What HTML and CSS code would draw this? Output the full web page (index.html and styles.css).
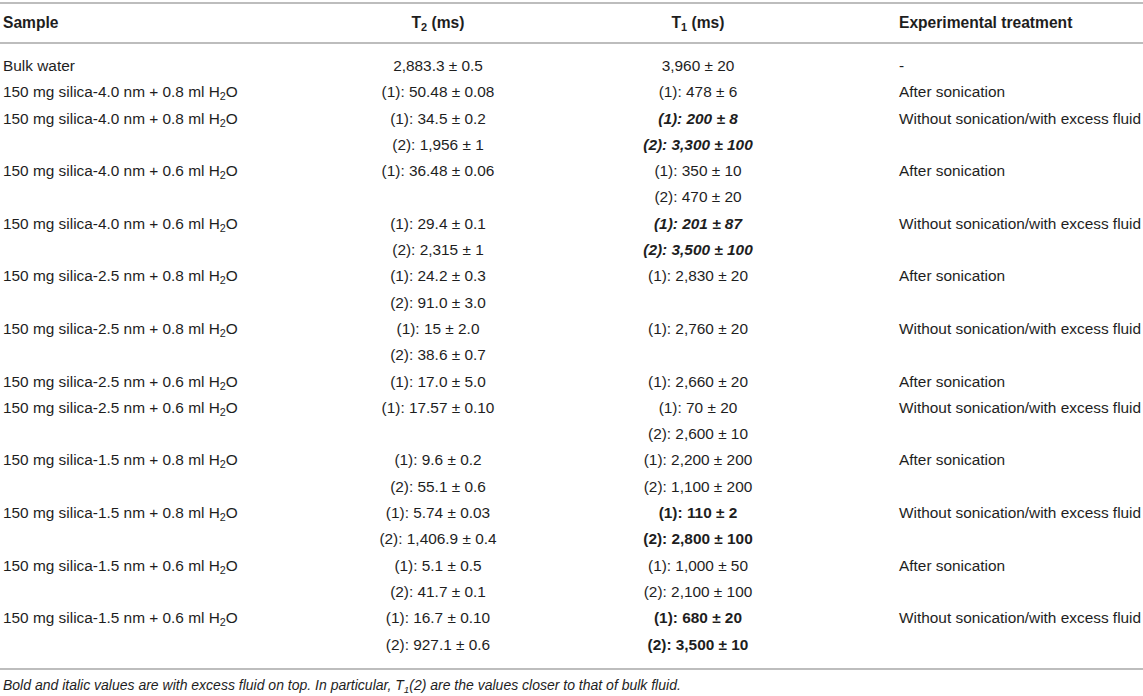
FILE: index.html
```html
<!DOCTYPE html>
<html lang="en">
<head>
  <meta charset="UTF-8">
  <title>Relaxation times</title>
  <link rel="stylesheet" href="styles.css">
</head>
<body>

  <table class="data-table">
    <colgroup>
      <col class="col-sample">
      <col class="col-t2">
      <col class="col-t1">
      <col class="col-treat">
    </colgroup>
    <thead>
      <tr>
        <th class="sample">Sample</th>
        <th class="num">T<sub>2</sub> (ms)</th>
        <th class="num">T<sub>1</sub> (ms)</th>
        <th class="treat">Experimental treatment</th>
      </tr>
    </thead>
    <tbody>
      <tr class="first">
        <td class="sample">Bulk water</td>
        <td class="num">2,883.3 ± 0.5</td>
        <td class="num">3,960 ± 20</td>
        <td class="treat">-</td>
      </tr>
      <tr>
        <td class="sample">150 mg silica-4.0 nm + 0.8 ml H<sub>2</sub>O</td>
        <td class="num">(1): 50.48 ± 0.08</td>
        <td class="num">(1): 478 ± 6</td>
        <td class="treat">After sonication</td>
      </tr>
      <tr>
        <td class="sample">150 mg silica-4.0 nm + 0.8 ml H<sub>2</sub>O</td>
        <td class="num"><div>(1): 34.5 ± 0.2</div><div>(2): 1,956 ± 1</div></td>
        <td class="num"><div class="hl-it">(1): 200 ± 8</div><div class="hl-it">(2): 3,300 ± 100</div></td>
        <td class="treat">Without sonication/with excess fluid</td>
      </tr>
      <tr>
        <td class="sample">150 mg silica-4.0 nm + 0.6 ml H<sub>2</sub>O</td>
        <td class="num">(1): 36.48 ± 0.06</td>
        <td class="num"><div>(1): 350 ± 10</div><div>(2): 470 ± 20</div></td>
        <td class="treat">After sonication</td>
      </tr>
      <tr>
        <td class="sample">150 mg silica-4.0 nm + 0.6 ml H<sub>2</sub>O</td>
        <td class="num"><div>(1): 29.4 ± 0.1</div><div>(2): 2,315 ± 1</div></td>
        <td class="num"><div class="hl-it">(1): 201 ± 87</div><div class="hl-it">(2): 3,500 ± 100</div></td>
        <td class="treat">Without sonication/with excess fluid</td>
      </tr>
      <tr>
        <td class="sample">150 mg silica-2.5 nm + 0.8 ml H<sub>2</sub>O</td>
        <td class="num"><div>(1): 24.2 ± 0.3</div><div>(2): 91.0 ± 3.0</div></td>
        <td class="num">(1): 2,830 ± 20</td>
        <td class="treat">After sonication</td>
      </tr>
      <tr>
        <td class="sample">150 mg silica-2.5 nm + 0.8 ml H<sub>2</sub>O</td>
        <td class="num"><div>(1): 15 ± 2.0</div><div>(2): 38.6 ± 0.7</div></td>
        <td class="num">(1): 2,760 ± 20</td>
        <td class="treat">Without sonication/with excess fluid</td>
      </tr>
      <tr>
        <td class="sample">150 mg silica-2.5 nm + 0.6 ml H<sub>2</sub>O</td>
        <td class="num">(1): 17.0 ± 5.0</td>
        <td class="num">(1): 2,660 ± 20</td>
        <td class="treat">After sonication</td>
      </tr>
      <tr>
        <td class="sample">150 mg silica-2.5 nm + 0.6 ml H<sub>2</sub>O</td>
        <td class="num">(1): 17.57 ± 0.10</td>
        <td class="num"><div>(1): 70 ± 20</div><div>(2): 2,600 ± 10</div></td>
        <td class="treat">Without sonication/with excess fluid</td>
      </tr>
      <tr>
        <td class="sample">150 mg silica-1.5 nm + 0.8 ml H<sub>2</sub>O</td>
        <td class="num"><div>(1): 9.6 ± 0.2</div><div>(2): 55.1 ± 0.6</div></td>
        <td class="num"><div>(1): 2,200 ± 200</div><div>(2): 1,100 ± 200</div></td>
        <td class="treat">After sonication</td>
      </tr>
      <tr>
        <td class="sample">150 mg silica-1.5 nm + 0.8 ml H<sub>2</sub>O</td>
        <td class="num"><div>(1): 5.74 ± 0.03</div><div>(2): 1,406.9 ± 0.4</div></td>
        <td class="num"><div class="hl">(1): 110 ± 2</div><div class="hl">(2): 2,800 ± 100</div></td>
        <td class="treat">Without sonication/with excess fluid</td>
      </tr>
      <tr>
        <td class="sample">150 mg silica-1.5 nm + 0.6 ml H<sub>2</sub>O</td>
        <td class="num"><div>(1): 5.1 ± 0.5</div><div>(2): 41.7 ± 0.1</div></td>
        <td class="num"><div>(1): 1,000 ± 50</div><div>(2): 2,100 ± 100</div></td>
        <td class="treat">After sonication</td>
      </tr>
      <tr class="last">
        <td class="sample">150 mg silica-1.5 nm + 0.6 ml H<sub>2</sub>O</td>
        <td class="num"><div>(1): 16.7 ± 0.10</div><div>(2): 927.1 ± 0.6</div></td>
        <td class="num"><div class="hl">(1): 680 ± 20</div><div class="hl">(2): 3,500 ± 10</div></td>
        <td class="treat">Without sonication/with excess fluid</td>
      </tr>
    </tbody>
  </table>

  <p class="footnote">Bold and italic values are with excess fluid on top. In particular, T<sub>1</sub>(2) are the values closer to that of bulk fluid.</p>

</body>
</html>
```

FILE: styles.css
```css
body {
  margin: 0;
  font-family: "Liberation Sans", Arial, sans-serif;
  color: #1e1e1e;
  background: #fff;
}

.data-table {
  width: 100%;
  margin-top: 2px;
  border-collapse: collapse;
  table-layout: fixed;
  font-size: 15.4px;
}

.col-sample { width: 330px; }
.col-t2 { width: 216px; }
.col-t1 { width: 304px; }

th, td {
  padding: 0;
  vertical-align: top;
  white-space: nowrap;
  line-height: 26.3px;
}

th {
  font-size: 15.6px;
  font-weight: bold;
  line-height: 38px;
  border-top: 2px solid #bdbdbd;
  border-bottom: 2px solid #bdbdbd;
}

.sample {
  text-align: left;
  padding-left: 3px;
}

.num {
  text-align: center;
}

.treat {
  text-align: left;
  padding-left: 49px;
}

sub {
  font-size: 0.7em;
  line-height: 0;
  vertical-align: -0.3em;
}

tr.first td {
  padding-top: 9px;
}

tr.last td {
  padding-bottom: 10px;
  border-bottom: 2px solid #bdbdbd;
}

.hl {
  font-weight: bold;
}

.hl-it {
  font-weight: bold;
  font-style: italic;
}

.footnote {
  margin: 5px 0 0;
  padding-left: 3px;
  font-size: 14px;
  font-style: italic;
  line-height: 20px;
}
```
